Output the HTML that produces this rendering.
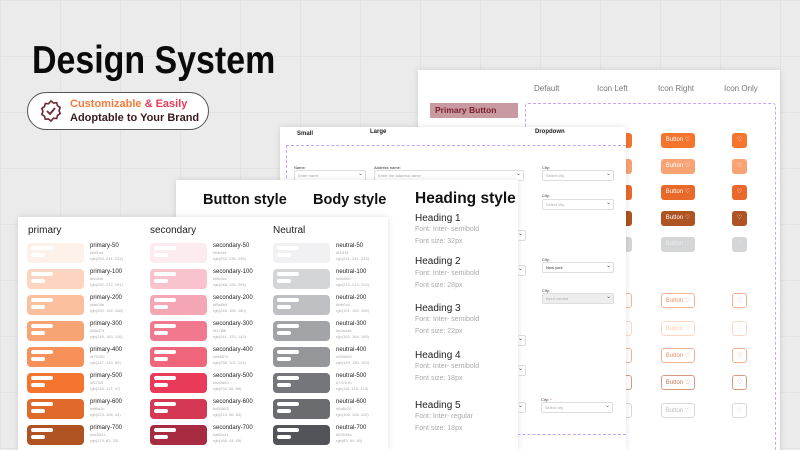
<!DOCTYPE html>
<html style="overflow:hidden;background:#ebebeb"><head><meta charset="utf-8"><style>
*{margin:0;padding:0;box-sizing:border-box}
body{width:800px;height:450px;overflow:hidden;background:#ebebeb;font-family:"Liberation Sans",sans-serif;position:relative;
background-image:linear-gradient(#e2e2e2 1px,transparent 1px),linear-gradient(90deg,#e2e2e2 1px,transparent 1px);background-size:60px 56px;background-position:0 0}
.a{position:absolute;white-space:nowrap}
.card{position:absolute;background:#fff;box-shadow:0 0 6px rgba(0,0,0,.12);overflow:hidden}
.sw{position:absolute;width:57px;height:20px;border-radius:4px}
.sw:after{content:"";position:absolute;left:4px;top:3px;width:22px;height:4px;border-radius:2px;background:#fff}
.sw:before{content:"";position:absolute;left:4px;top:10px;width:14px;height:4px;border-radius:2px;background:#fff}
.lb{position:absolute;font-size:6px;color:#222;line-height:7px;white-space:nowrap}
.lb s{text-decoration:none;display:block;color:#aaa;font-size:4px;line-height:6px}
.btn{position:absolute;width:34px;height:15px;border-radius:3px;font-size:6px;color:#fff;text-align:center;line-height:15px}
.ic{position:absolute;width:15px;height:15px;border-radius:3px;font-size:6px;color:#fff;text-align:center;line-height:15px}
.sel{position:absolute;height:11px;border:1px solid #ddd;border-radius:2px;font-size:4px;color:#aaa;padding-left:3px;line-height:9px}
.sel:after{content:"⌄";position:absolute;right:2px;top:-1px;color:#555;font-size:6px}
.fl{position:absolute;font-size:4px;color:#333;white-space:nowrap}
.h{position:absolute;font-size:10px;color:#222;white-space:nowrap}
.f{position:absolute;font-size:7px;color:#aaa;white-space:nowrap}
</style></head><body>
<div class="a" style="left:32px;top:39px;font-size:39px;font-weight:bold;color:#0a0a0a;transform:scaleX(0.87);transform-origin:left">Design System</div>
<div class="a" style="left:27px;top:92px;width:182px;height:38px;border:1.5px solid #555;border-radius:19px;background:#fff"></div>
<svg class="a" style="left:39px;top:99px" width="24" height="24" viewBox="0 0 24 24"><path d="M12 2l2.5 2 3.2-.3.8 3.1 2.7 1.8-1.2 3 1.2 3-2.7 1.8-.8 3.1-3.2-.3L12 22l-2.5-2-3.2.3-.8-3.1-2.7-1.8 1.2-3-1.2-3 2.7-1.8.8-3.1 3.2.3z" fill="none" stroke="#6b2a35" stroke-width="1.6"/><path d="M8 12l3 3 5-6" fill="none" stroke="#6b2a35" stroke-width="1.8"/></svg>
<div class="a" style="left:70px;top:98px;font-size:11px;font-weight:bold;color:#f47b3a">Customizable <span style="color:#ea3a59">&amp; Easily</span></div>
<div class="a" style="left:70px;top:112px;font-size:11px;font-weight:bold;color:#3a1b20">Adoptable to Your Brand</div>

<div class="card" style="left:418px;top:70px;width:362px;height:380px">
<div class="a" style="left:116px;top:14px;font-size:8px;color:#777">Default</div>
<div class="a" style="left:179px;top:14px;font-size:8px;color:#777">Icon Left</div>
<div class="a" style="left:240px;top:14px;font-size:8px;color:#777">Icon Right</div>
<div class="a" style="left:306px;top:14px;font-size:8px;color:#777">Icon Only</div>
<div class="a" style="left:12px;top:33px;width:88px;height:15px;background:#c99aa1;color:#7a2030;font-size:8.5px;font-weight:bold;line-height:15px;padding-left:5px">Primary Button</div>
<div class="a" style="left:107px;top:33px;width:251px;height:360px;border:1px dashed #c6a4f5;border-radius:3px"></div>
<div class="btn" style="left:243px;top:63px;background:#f5752f">Button ♡</div><div class="ic" style="left:314px;top:63px;background:#f5752f">♡</div>
<div class="btn" style="left:243px;top:89px;background:#f8a374">Button ♡</div><div class="ic" style="left:314px;top:89px;background:#f8a374">♡</div>
<div class="btn" style="left:243px;top:115px;background:#e9692b">Button ♡</div><div class="ic" style="left:314px;top:115px;background:#e9692b">♡</div>
<div class="btn" style="left:243px;top:141px;background:#ae5321">Button ♡</div><div class="ic" style="left:314px;top:141px;background:#ae5321">♡</div>
<div class="btn" style="left:243px;top:167px;background:#d4d5d7;color:#eee">Button ♡</div><div class="ic" style="left:314px;top:167px;background:#d4d5d7;color:#eee">♡</div>
<div class="btn" style="left:243px;top:223px;border:1px solid #f8b690;color:#f4955f">Button ♡</div><div class="ic" style="left:314px;top:223px;border:1px solid #f8b690;color:#f4955f">♡</div>
<div class="btn" style="left:243px;top:251px;border:1px solid #fbd9c6;color:#f9cdb3">Button ♡</div><div class="ic" style="left:314px;top:251px;border:1px solid #fbd9c6;color:#f9cdb3">♡</div>
<div class="btn" style="left:243px;top:278px;border:1px solid #f1b196;color:#e8946a">Button ♡</div><div class="ic" style="left:314px;top:278px;border:1px solid #f1b196;color:#e8946a">♡</div>
<div class="btn" style="left:243px;top:305px;border:1px solid #d59a80;color:#c27857">Button ♡</div><div class="ic" style="left:314px;top:305px;border:1px solid #d59a80;color:#c27857">♡</div>
<div class="btn" style="left:243px;top:333px;border:1px solid #d8d8d8;color:#bbb">Button ♡</div><div class="ic" style="left:314px;top:333px;border:1px solid #d8d8d8;color:#bbb">♡</div>
<div class="btn" style="left:200px;top:63px;width:14px;background:#f5752f"></div>
<div class="btn" style="left:200px;top:89px;width:14px;background:#f8a374"></div>
<div class="btn" style="left:200px;top:115px;width:14px;background:#e9692b"></div>
<div class="btn" style="left:200px;top:141px;width:14px;background:#ae5321"></div>
<div class="btn" style="left:200px;top:167px;width:14px;background:#d4d5d7"></div>
<div class="btn" style="left:200px;top:223px;width:14px;border:1px solid #f8b690"></div>
<div class="btn" style="left:200px;top:251px;width:14px;border:1px solid #fbd9c6"></div>
<div class="btn" style="left:200px;top:278px;width:14px;border:1px solid #f1b196"></div>
<div class="btn" style="left:200px;top:305px;width:14px;border:1px solid #d59a80"></div>
<div class="btn" style="left:200px;top:333px;width:14px;border:1px solid #d8d8d8"></div>
</div>

<div class="card" style="left:280px;top:127px;width:346px;height:323px">
<div class="a" style="left:17px;top:4px;font-size:6px;font-weight:bold;color:#222">Small</div>
<div class="a" style="left:90px;top:2px;font-size:6px;font-weight:bold;color:#222">Large</div>
<div class="a" style="left:255px;top:2px;font-size:6px;font-weight:bold;color:#222">Dropdown</div>
<div class="a" style="left:6px;top:18px;width:345px;height:320px;border-top:1px dashed #c6a4f5;border-left:1px dashed #c6a4f5"></div>
<div class="a" style="left:6px;top:307px;width:340px;border-top:1px dashed #c6a4f5"></div>
<div class="fl" style="left:14px;top:38px">Name:</div><div class="sel" style="left:14px;top:43px;width:72px">Enter name</div>
<div class="fl" style="left:94px;top:38px">Address name:</div><div class="sel" style="left:94px;top:43px;width:150px">Enter the address name</div>
<div class="fl" style="left:262px;top:38px">City:</div><div class="sel" style="left:262px;top:43px;width:72px">Select city</div>
<div class="fl" style="left:262px;top:66px">City:</div><div class="sel" style="left:262px;top:72px;width:72px">Select city</div>
<div class="sel" style="left:238px;top:103px;width:8px;border-left:none"></div>
<div class="sel" style="left:238px;top:138px;width:8px;border-left:none"></div>
<div class="fl" style="left:262px;top:130px">City:</div><div class="sel" style="left:262px;top:135px;width:72px;color:#333">New york</div>
<div class="fl" style="left:262px;top:161px">City:</div><div class="sel" style="left:262px;top:166px;width:72px;background:#eee">Input correct</div>
<div class="sel" style="left:238px;top:208px;width:8px;border-left:none"></div>
<div class="sel" style="left:238px;top:238px;width:8px;border-left:none"></div>
<div class="fl" style="left:261px;top:270px">City: <span style="color:#e33">*</span></div><div class="sel" style="left:261px;top:275px;width:72px">Select city</div>
<div class="sel" style="left:238px;top:275px;width:8px;border-left:none"></div>
</div>

<div class="card" style="left:176px;top:180px;width:342px;height:270px">
<div class="a" style="left:27px;top:12px;font-size:14.5px;font-weight:bold;color:#111">Button style</div>
<div class="a" style="left:137px;top:12px;font-size:14.5px;font-weight:bold;color:#111">Body style</div>
<div class="a" style="left:239px;top:10px;font-size:15.5px;font-weight:bold;color:#111">Heading style</div>
<div class="h" style="left:239px;top:33px">Heading 1</div><div class="f" style="left:239px;top:46px">Font: Inter- semibold</div><div class="f" style="left:239px;top:58px">Font size: 32px</div>
<div class="h" style="left:239px;top:76px">Heading 2</div><div class="f" style="left:239px;top:90px">Font: Inter- semibold</div><div class="f" style="left:239px;top:102px">Font size: 28px</div>
<div class="h" style="left:239px;top:123px">Heading 3</div><div class="f" style="left:239px;top:136px">Font: Inter- semibold</div><div class="f" style="left:239px;top:148px">Font size: 22px</div>
<div class="h" style="left:239px;top:170px">Heading 4</div><div class="f" style="left:239px;top:183px">Font: Inter- semibold</div><div class="f" style="left:239px;top:195px">Font size: 18px</div>
<div class="h" style="left:239px;top:220px">Heading 5</div><div class="f" style="left:239px;top:233px">Font: Inter- regular</div><div class="f" style="left:239px;top:245px">Font size: 18px</div>
</div>

<div class="card" style="left:18px;top:217px;width:370px;height:233px">
<div class="a" style="left:10px;top:8px;font-size:10px;color:#222">primary</div>
<div class="a" style="left:132px;top:8px;font-size:10px;color:#222">secondary</div>
<div class="a" style="left:255px;top:8px;font-size:10px;color:#222">Neutral</div>

<div class="sw" style="left:9px;top:26px;background:#fef1ea"></div><div class="lb" style="left:72px;top:26px">primary-50<s>#fef1ea</s><s>rgb(254, 241, 234)</s></div>
<div class="sw" style="left:9px;top:52px;background:#fcd4bf"></div><div class="lb" style="left:72px;top:52px">primary-100<s>#fcd4bf</s><s>rgb(252, 212, 191)</s></div>
<div class="sw" style="left:9px;top:78px;background:#fac09e"></div><div class="lb" style="left:72px;top:78px">primary-200<s>#fac09e</s><s>rgb(250, 192, 158)</s></div>
<div class="sw" style="left:9px;top:104px;background:#f8a374"></div><div class="lb" style="left:72px;top:104px">primary-300<s>#f8a374</s><s>rgb(248, 163, 116)</s></div>
<div class="sw" style="left:9px;top:130px;background:#f79159"></div><div class="lb" style="left:72px;top:130px">primary-400<s>#f79159</s><s>rgb(247, 145, 89)</s></div>
<div class="sw" style="left:9px;top:156px;background:#f5752f"></div><div class="lb" style="left:72px;top:156px">primary-500<s>#f5752f</s><s>rgb(245, 117, 47)</s></div>
<div class="sw" style="left:9px;top:182px;background:#df6a2b"></div><div class="lb" style="left:72px;top:182px">primary-600<s>#df6a2b</s><s>rgb(223, 106, 43)</s></div>
<div class="sw" style="left:9px;top:208px;background:#ae5321"></div><div class="lb" style="left:72px;top:208px">primary-700<s>#ae5321</s><s>rgb(174, 83, 33)</s></div>

<div class="sw" style="left:132px;top:26px;background:#fdecef"></div><div class="lb" style="left:195px;top:26px">secondary-50<s>#fdecef</s><s>rgb(253, 236, 239)</s></div>
<div class="sw" style="left:132px;top:52px;background:#f8c3cc"></div><div class="lb" style="left:195px;top:52px">secondary-100<s>#f8c3cc</s><s>rgb(248, 195, 204)</s></div>
<div class="sw" style="left:132px;top:78px;background:#f5a6b4"></div><div class="lb" style="left:195px;top:78px">secondary-200<s>#f5a6b4</s><s>rgb(245, 166, 180)</s></div>
<div class="sw" style="left:132px;top:104px;background:#f1788f"></div><div class="lb" style="left:195px;top:104px">secondary-300<s>#f1788f</s><s>rgb(241, 120, 143)</s></div>
<div class="sw" style="left:132px;top:130px;background:#ee657c"></div><div class="lb" style="left:195px;top:130px">secondary-400<s>#ee657c</s><s>rgb(238, 101, 124)</s></div>
<div class="sw" style="left:132px;top:156px;background:#ea3a59"></div><div class="lb" style="left:195px;top:156px">secondary-500<s>#ea3a59</s><s>rgb(234, 58, 89)</s></div>
<div class="sw" style="left:132px;top:182px;background:#d53853"></div><div class="lb" style="left:195px;top:182px">secondary-600<s>#d53853</s><s>rgb(213, 56, 83)</s></div>
<div class="sw" style="left:132px;top:208px;background:#a82c41"></div><div class="lb" style="left:195px;top:208px">secondary-700<s>#a82c41</s><s>rgb(168, 44, 65)</s></div>

<div class="sw" style="left:255px;top:26px;background:#f1f1f3"></div><div class="lb" style="left:318px;top:26px">neutral-50<s>#f1f1f3</s><s>rgb(241, 241, 243)</s></div>
<div class="sw" style="left:255px;top:52px;background:#d4d5d7"></div><div class="lb" style="left:318px;top:52px">neutral-100<s>#d4d5d7</s><s>rgb(212, 213, 215)</s></div>
<div class="sw" style="left:255px;top:78px;background:#bfc0c4"></div><div class="lb" style="left:318px;top:78px">neutral-200<s>#bfc0c4</s><s>rgb(191, 192, 196)</s></div>
<div class="sw" style="left:255px;top:104px;background:#a2a4a8"></div><div class="lb" style="left:318px;top:104px">neutral-300<s>#a2a4a8</s><s>rgb(162, 164, 168)</s></div>
<div class="sw" style="left:255px;top:130px;background:#959699"></div><div class="lb" style="left:318px;top:130px">neutral-400<s>#959699</s><s>rgb(149, 150, 153)</s></div>
<div class="sw" style="left:255px;top:156px;background:#74767b"></div><div class="lb" style="left:318px;top:156px">neutral-500<s>#74767b</s><s>rgb(116, 118, 123)</s></div>
<div class="sw" style="left:255px;top:182px;background:#6a6c70"></div><div class="lb" style="left:318px;top:182px">neutral-600<s>#6a6c70</s><s>rgb(106, 108, 112)</s></div>
<div class="sw" style="left:255px;top:208px;background:#53545a"></div><div class="lb" style="left:318px;top:208px">neutral-700<s>#53545a</s><s>rgb(83, 84, 90)</s></div>
</div>
</body></html>
